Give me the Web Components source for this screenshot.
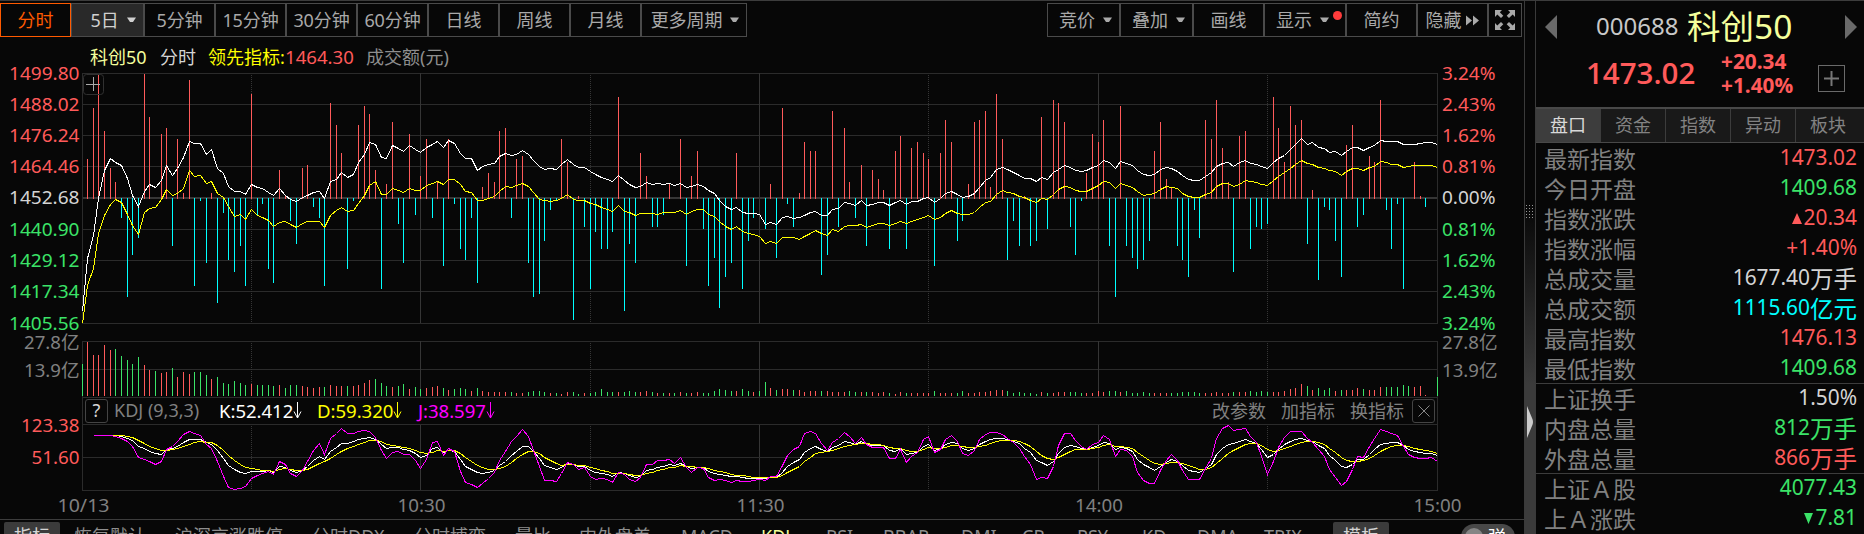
<!DOCTYPE html>
<html lang="zh-CN">
<head>
<meta charset="utf-8">
<title>科创50 000688</title>
<style>
    html, body { margin: 0; height: 534px; overflow: hidden; background: #070707; }
    body {
        font-family: "Noto Sans", "Noto Sans CJK SC", sans-serif;
        font-size: 18px;
        --red: #ff5a5a;
        --green: #3be368;
        --line: #4a4a4a;
        --grid: #2b2b2b;
        --dim: #808080;
    }
</style>
</head>
<body>
<stock-app></stock-app>

<script>
// Minute strength bars. Above the zero line = red, below = cyan, 0 = no bar.
const BARS = [
    0,159,108,74,131,168,182,218,297,255,238,74,117,0,134,128,246,139,193,80,286,201,263,193,303,213,260,272,246,286,
    94,215,204,269,283,170,196,221,244,168,165,207,218,286,103,125,153,269,201,125,106,114,170,289,184,122,224,263,134,215,
    176,139,218,182,266,139,204,249,260,218,283,187,173,182,131,128,218,159,156,263,297,294,241,210,201,139,162,320,196,227,
    289,232,249,249,232,97,311,244,263,153,176,227,227,215,183,0,139,266,176,151,229,286,258,308,277,263,153,289,241,218,
    0,229,184,258,108,204,227,193,142,151,151,275,255,111,227,128,182,218,165,246,170,179,190,249,151,136,249,148,142,153,
    159,266,153,120,142,241,221,184,122,120,111,187,94,139,260,221,246,196,246,241,117,229,100,103,122,227,255,201,173,134,
    142,120,246,297,106,246,258,269,260,241,151,122,179,187,246,260,277,210,238,120,139,100,148,182,272,136,131,249,227,229,
    224,97,128,162,106,125,120,244,190,280,207,210,241,277,145,125,227,215,156,162,100,210,249,204,289,0,162,196,207,0,0
];

const PRICE = [
    311.7,258.3,235,198,170,158.3,162.3,165.3,178.3,195,206.7,191,184.3,187.7,180.7,165.7,175.3,168.7,157.7,141,143.3,143.3,154.7,149.7,168.3,173.3,186.7,191.3,191.3,194.3,
    184.3,187.3,188.7,192,195.3,188.7,195,199.3,201.7,197.7,195,192.3,191.3,198.3,181.7,179,172.7,177.3,174,162.7,154.3,142.3,144.3,157,158.3,145.3,148.7,151.3,145.7,149.7,
    152.3,147.7,144,141,147,140,143.3,153.3,158.3,158.3,170.3,166,164.3,163.3,156.3,153.3,155.3,154.3,150.7,154.7,160.3,166.7,169.7,168.3,169.3,164.3,159.7,164.7,167.3,167.3,
    171,174,177.3,179.7,181.7,175.7,180.7,184.7,187.3,186.3,182.3,184.3,183.3,184.3,183.3,185.3,183.3,187.3,186.7,184.3,186.7,190,193.3,200,206.3,209.3,207.3,212.3,213.3,213.3,
    214.7,224.7,222.3,224.7,217.3,216.3,218.7,217,215,212.3,211.3,215,215.3,209.3,208,202.3,203.3,205.3,200.3,205.3,204,202.3,202.3,205,202.3,200.3,204.3,201.3,201,198,
    197.3,202.3,198.7,193.7,191.3,194.3,197.3,196.3,193,187.3,180,177.7,169.7,167,169.3,172.3,175,178.3,178.3,181.3,177.3,179.7,172.3,169.7,165.3,167.3,170.3,171.7,170.3,167.3,
    165.3,160.3,162,168.7,161.7,163.3,165.3,170.7,174.3,175.7,174.3,169.3,167,168.3,171.3,175,179.3,180.7,180.7,176,172.7,166.3,163.3,162.3,166.3,162.3,160.3,163,164.3,166.3,
    168.7,162.3,158.3,155.3,149.7,144.3,138.3,144.7,142.3,147,148.7,152.3,151.3,155.3,151.3,147,147.7,150.3,147.3,145.3,140.3,141.3,141.3,141.3,144,144,144,143,142.3,142.3,144.3
];

const LEAD = [
    323,285,268.3,233.3,215,204,199.7,202,214.3,225,234.3,212.3,208.7,207.3,199,189.7,195.3,193.3,188.7,170.7,176.3,175.3,183.7,181.7,193.7,197.3,206,216.7,214.3,219,
    209.3,215.7,217,220.7,226.7,222.7,221.3,224.7,227.3,223.7,221.3,221.3,221.3,227.3,215,210.7,207.7,211.3,210.3,203.3,195,185,181.7,194.3,194.3,188.3,190.3,192.3,188.7,190.3,
    190.3,185.7,183.3,181.3,184.3,179.3,179.3,184,191.3,192.3,200,200,198,196,191,186.3,187.3,185.7,183.3,186,192.3,199,200.3,201.7,200,198.3,194.7,199,200.3,200.3,
    203.3,204.3,207.3,209.7,211.3,205.3,211.3,212.3,215.3,213.3,213.3,213.3,214.3,212.3,212.3,212.3,210.3,214,211.7,209.3,209.3,214,216.7,221.3,226,229,226.3,231.3,233.3,234.3,
    236.3,243.3,241.3,243.3,237.3,237.3,237.3,239.3,236.7,233,230.3,233,235.7,229.3,231.3,226.3,225.3,225.3,224.3,227.3,225.3,223.3,223.3,225.7,223.3,221.3,223.7,221.3,219.3,217.3,
    215.3,219.3,217.3,213.3,210.3,213.3,214.3,214.3,212.3,207.3,202.7,201.3,194.3,190.3,192.3,193.3,196,197.3,200.3,202.3,198.3,199.3,194.3,189.3,186.3,187.3,190,191.3,191.3,188.3,
    185,181.3,182.3,188.3,183.3,185,187.3,191,195.3,194.3,193,189.3,186.3,187.3,188.7,193,196,197.3,197.3,194,192.3,186,183.3,183.3,186.3,184.3,180.7,181.3,182.3,184.3,
    185.3,180.3,176,172.7,168.3,164.7,160,163.3,164.7,167.7,168.3,170.3,171.7,175.3,171.3,168.3,168.3,170.3,167.7,166.3,161.3,162.7,164.3,164.3,167.3,166.7,165.3,165.3,165.3,165.3,167.3
];

// Turnover bars: top of the bar and r/g for rising/falling minute
const VOLUME = ("g364 r342 r355 r355 r345 r350 g349 g356 g360 g364 g357 r365 r370 g371 r373 r372 g368 r377 r372 r374 g372 g372 g375 r379 g377 g383 g384 g381 g383 g385 " +
    "r384 g385 g385 g385 g386 r385 g388 g385 g385 r386 r387 r388 r387 g387 r385 r386 r386 g386 r386 r385 r383 r380 g379 g383 g386 r387 g386 g384 r389 g387 " +
    "g389 r388 r387 r386 g388 r390 g389 g388 g389 r391 g388 r391 r392 r392 r392 r392 g392 r393 r393 g392 g391 g391 g392 r393 g393 r394 r392 g392 g394 r393 " +
    "g393 g392 g389 g392 g392 r392 g392 g391 g392 r392 r391 g392 r393 g393 r393 g393 r392 g393 r393 r392 g393 g393 g391 g389 g390 g391 r391 g389 g391 r392 " +
    "g391 g382 r388 g390 r389 r389 g390 r390 r392 r391 r391 g391 r391 r392 r392 r392 g391 g392 r392 g392 r392 r393 r392 g393 r394 r392 g393 r393 r393 r393 " +
    "r393 g391 r393 r393 r393 g393 g391 r393 r393 r392 r392 r391 r390 r390 g391 g393 g392 g393 g393 g394 r392 g393 r393 r392 r392 g392 g392 g393 r393 r393 " +
    "r391 r392 g391 g391 r392 g391 g393 g393 g392 g393 r393 r393 r393 g393 g393 g392 g392 g392 g393 r393 r393 r392 r393 r393 g392 r392 r392 g391 g392 g391 " +
    "g392 r392 r392 r391 r389 r388 r384 g386 r390 g388 g390 g388 r391 g390 r390 r390 r388 g389 r390 r390 r387 g387 g387 g387 g385 g386 r387 r386 r395 r396 g377").split(" ");

// J starts at minute 2. K and D are derived from it.
const J = [
    435.3,435.3,435.3,435.3,436.3,438,441,446.7,457.3,459.3,461.7,464.3,461.3,449.3,446,441.7,434.3,431.3,433.3,435.3,444,448.3,461.7,476.7,487,489.3,488.7,486.7,
    478,475,473.3,471.7,474,461.3,464,473.3,476.3,470,461,450,443.3,454,438,433.3,428.7,433.3,433.3,431,430.3,431.7,437.3,450,458.7,452.7,451.3,454,454.7,460.7,
    468.3,459.3,442.7,441,455.3,448.7,451.3,471.7,482.3,484.7,487,483.3,478.3,472.3,460.7,451.7,441.7,436,429.3,436,450,466.7,480.3,480.3,481,473.3,462.3,464.7,469,467.7,
    476.7,479.3,478.7,479.7,482.3,472.3,474.3,479,481.3,477.3,464.3,464,460.3,460.3,459.3,463.3,457.7,467.3,472.3,467.7,468.7,477.3,480.3,479.3,480,482.3,480,481.3,481.3,480.3,
    479.3,480.7,476.3,476.3,465,455,449.3,446,433.3,431.3,433.3,443.3,450.3,442.7,438.7,432.7,436.7,443.3,437.3,444.3,447.3,447,447,458.7,458.3,449.3,462.3,456.7,452.7,439.3,
    436.3,452.7,449.3,439.3,435.3,441.7,453.3,455.7,450,439.3,434.7,432.3,432.3,434.7,438,442,448.3,456.7,464.7,479.7,477.3,478.7,466,445,433.3,433.3,440.7,446,449.3,444.3,
    442.7,435,439.3,456.7,449.3,450.7,456.7,472.7,480,483.7,483.3,470,460,454.7,460,470,479.3,479.3,479.3,468.3,458.3,438.3,428.3,425,430.3,429,428.3,436.7,442.7,456.7,
    474.7,461.7,447.3,437.3,431.3,431.3,431.3,438.3,442.3,449.3,456.7,469.3,477.3,485.3,481,469.3,456.7,457.7,446.7,438.3,429.3,431.3,433.3,435.7,446.7,454.7,457.7,458.3,458.3,457.7,461
];

const LEFT = 82;
const RIGHT = 1437;
const STEP = (RIGHT - LEFT) / 240;
const minuteX = (i) => Math.floor(LEFT + STEP * i + 0.01);

const polyline = (values, color, start = 0) => {
    const points = values
        .map((y, i) => `${minuteX(i + start) + 0.5},${Math.floor(y) + 0.5}`)
        .join(" ");
    return `<polyline points="${points}" fill="none" stroke="${color}" shape-rendering="crispEdges"/>`;
};

const rect = (x, y, w, h, color) =>
    `<rect x="${x}" y="${y}" width="${w}" height="${h}" fill="${color}"/>`;

const label = (x, y, text, color, anchor = "start", width = 0) =>
    `<text x="${x}" y="${y + 6.8}" fill="${color}" text-anchor="${anchor}"${
        width ? ` textLength="${width}" lengthAdjust="spacingAndGlyphs"` : ""
    }>${text}</text>`;

// Half-hour grid: hours solid, half hours dotted
const verticals = (top, bottom) => {
    let out = rect(LEFT, top, 1, bottom - top, "#2b2b2b") + rect(RIGHT, top, 1, bottom - top + 1, "#2b2b2b");
    for (let i = 1; i < 8; i++) {
        const x = minuteX(i * 30);
        out += i % 2
            ? `<path d="M${x + 0.5} ${top + 2}V${bottom}" stroke="#353535" stroke-dasharray="1 1"/>`
            : rect(x, top, 1, bottom - top, "#353535");
    }
    return out;
};

class BaseElement extends HTMLElement {
    constructor() {
        super();
        this.attachShadow({ mode: "open" });
    }

    connectedCallback() {
        this.shadowRoot.innerHTML = this.render();
    }
}

class ToolButton extends BaseElement {
    render() {
        const icons = {
            caret: `<svg class="caret" width="9" height="6"><path d="M0 0.5H9L6 5H3Z" fill="currentColor"/></svg>`,
            forward: `<svg width="13" height="11" style="margin-left:5px"><path d="M0 .5L6 5.5 0 10.5ZM7 .5L13 5.5 7 10.5Z" fill="currentColor"/></svg>`,
            expand: `<svg width="22" height="22" viewBox="0 0 22 22" fill="currentColor"><path d="M1 1H8L5.8 3.2 9.3 6.7 7 9 3.3 5.5 1 8ZM21 1V8L18.7 5.5 15 9 12.7 6.7 16.2 3.2 14 1ZM1 21V14L3.3 16.5 7 13 9.3 15.3 5.8 18.8 8 21ZM21 21H14L16.2 18.8 12.7 15.3 15 13 18.7 16.5 21 14Z"/></svg>`,
        };
        return `
        <style>
            :host {
                display: flex; align-items: center; justify-content: center;
                box-sizing: border-box; height: 34px;
                border: 1px solid var(--line); color: #a9a9a9;
                white-space: nowrap; position: relative;
            }
            :host([active]) { border-color: #ff5a00; color: #ff5a00; }
            :host([filled]) { background: #292929; color: #d0d0d0; }
            .text { letter-spacing: -0.1px; margin-bottom: 2px; }
            .caret { margin-left: 8px; }
            .dot { position: absolute; right: 3px; top: 7px; width: 9px; height: 9px; border-radius: 50%; background: #ff3b3b; }
        </style>
        <span class="text"><slot></slot></span>${icons[this.getAttribute("icon")] || ""}
        ${this.hasAttribute("dot") ? `<i class="dot"></i>` : ""}`;
    }
}

class ToolBar extends BaseElement {
    render() {
        return `
        <style>
            :host { display: flex; padding-top: 2px; width: 1522px; justify-content: space-between; }
            div { display: flex; }
        </style>
        <div>
            <tool-button style="width:71px" active>分时</tool-button>
            <tool-button style="width:73px;padding-left:11px" icon="caret" filled>5日</tool-button>
            <tool-button style="width:71px">5分钟</tool-button>
            <tool-button style="width:71px">15分钟</tool-button>
            <tool-button style="width:71px">30分钟</tool-button>
            <tool-button style="width:71px">60分钟</tool-button>
            <tool-button style="width:71px">日线</tool-button>
            <tool-button style="width:71px">周线</tool-button>
            <tool-button style="width:71px">月线</tool-button>
            <tool-button style="width:106px;padding-left:2px" icon="caret">更多周期</tool-button>
        </div>
        <div>
            <tool-button style="width:73px;padding-left:4px" icon="caret">竞价</tool-button>
            <tool-button style="width:73px;padding-left:4px" icon="caret">叠加</tool-button>
            <tool-button style="width:71px">画线</tool-button>
            <tool-button style="width:82px;padding-right:5px" icon="caret" dot>显示</tool-button>
            <tool-button style="width:71px">简约</tool-button>
            <tool-button style="width:71px" icon="forward">隐藏</tool-button>
            <tool-button style="width:34px" icon="expand"></tool-button>
        </div>`;
    }
}

class ChartLegend extends BaseElement {
    render() {
        return `
        <style>
            :host { display: flex; align-items: center; height: 28px; padding: 5px 0 0 90px; margin-bottom: -5px; white-space: nowrap; }
            span { width: var(--w); }
        </style>
        <span style="--w:70px;color:#f4ff9c">科创50</span>
        <span style="--w:48px;color:#d4d4d4">分时</span>
        <span style="--w:77px;color:#ff0">领先指标:</span>
        <span style="--w:81px;color:var(--red);font-size:18.6px">1464.30</span>
        <span style="--w:90px;color:#8e8e8e">成交额(元)</span>`;
    }
}

class PriceChart extends BaseElement {
    render() {
        const prices = ["1499.80", "1488.02", "1476.24", "1464.46", "1452.68", "1440.90", "1429.12", "1417.34", "1405.56"];
        const percents = ["3.24%", "2.43%", "1.62%", "0.81%", "0.00%", "0.81%", "1.62%", "2.43%", "3.24%"];
        const rows = [73, 104, 135, 166, 197, 229, 260, 291, 323];
        let svg = "";

        rows.forEach((y, i) => {
            const color = i < 4 ? "var(--red)" : i > 4 ? "var(--green)" : "#d4d4d4";
            svg += rect(LEFT, y, RIGHT - LEFT, i === 4 ? 2 : 1, i === 4 ? "#363636" : "#2b2b2b");
            svg += label(79.5, y, prices[i], color, "end", 70.5);
            svg += label(1442, y, percents[i], color, "start", 53.5);
        });
        [341, 369, 397].forEach((y) => {
            svg += rect(LEFT, y, RIGHT - LEFT, 1, "#2b2b2b");
        });
        svg += label(79.5, 342, "27.8亿", "#808080", "end", 55.5) + label(79.5, 370, "13.9亿", "#808080", "end", 55.5);
        svg += label(1442, 342, "27.8亿", "#808080", "start", 55.5) + label(1442, 370, "13.9亿", "#808080", "start", 55.5);
        svg += verticals(73, 323) + verticals(341, 397);

        BARS.forEach((y, i) => {
            if (!y) return;
            svg += y < 197
                ? rect(minuteX(i), y, 1, 199 - y, "var(--red)")
                : rect(minuteX(i), 198, 1, y - 198, "#0ff");
        });
        VOLUME.forEach((v, i) => {
            const y = Number(v.slice(1));
            svg += rect(minuteX(i), y, 1, 396 - y, v[0] === "r" ? "var(--red)" : "var(--green)");
        });
        svg += polyline(LEAD, "#ff0") + polyline(PRICE, "#fff");
        svg += `<rect x="83.5" y="74.5" width="20" height="20" rx="3" fill="none" stroke="#303030"/>
            <path d="M86 84.5H100M93.5 77V91" stroke="#aaa" shape-rendering="crispEdges"/>`;

        return `
        <style>
            :host { display: block; height: 333px; }
            svg { display: block; overflow: visible; font-size: 18.5px; }
        </style>
        <svg width="1524" height="333" viewBox="0 65 1524 333">${svg}</svg>`;
    }
}

class KdjHeader extends BaseElement {
    render() {
        const arrow = `<svg width="9" height="18" fill="none" stroke="currentColor"><path d="M4.5 1V17M1 10.5L4.5 17 8 10.5"/></svg>`;
        return `
        <style>
            :host {
                display: flex; align-items: center; box-sizing: border-box;
                width: 1356px; height: 26px; margin-left: 82px; padding: 0 2px 1px;
                border: solid var(--grid); border-width: 0 1px; white-space: nowrap;
            }
            .box { box-sizing: border-box; width: 23px; height: 24px; border: 1px solid #444; border-radius: 3px; color: #d4d4d4; text-align: center; line-height: 21px; }
            .value { display: flex; align-items: center; width: var(--w); font-size: 18.6px; letter-spacing: -0.05px; margin-top: -1px; }
            .name { width: 105px; margin: -1px 0 0 6px; color: var(--dim); }
            .action { color: var(--dim); width: 69px; margin-top: -1px; }
            .spacer { flex: 1; }
            .close { display: grid; place-items: center; margin-left: -7px; }
        </style>
        <span class="box">?</span>
        <span class="name">KDJ (9,3,3)</span>
        <span class="value" style="--w:98px;color:#fff">K:52.412${arrow}</span>
        <span class="value" style="--w:101px;color:#ff0">D:59.320${arrow}</span>
        <span class="value" style="--w:90px;color:#f0f">J:38.597${arrow}</span>
        <span class="spacer"></span>
        <span class="action">改参数</span>
        <span class="action">加指标</span>
        <span class="action">换指标</span>
        <span class="box close"><svg width="12" height="12" stroke="#888"><path d="M0.5 0.5L11.5 11.5M11.5 0.5L0.5 11.5"/></svg></span>`;
    }
}

class KdjChart extends BaseElement {
    render() {
        let d = J[0];
        const D = J.map((j) => (d = (6 * d + j) / 7));
        const K = J.map((j, i) => (j + 2 * D[i]) / 3);

        let svg = verticals(424, 490);
        [424, 457, 490].forEach((y) => {
            svg += rect(LEFT, y, RIGHT - LEFT, 1, "#2b2b2b");
        });
        svg += label(79.5, 425, "123.38", "var(--red)", "end", 58.5);
        svg += label(79.5, 457, "51.60", "var(--red)", "end", 48);
        svg += polyline(K, "#fff", 2) + polyline(D, "#ff0", 2) + polyline(J, "#f0f", 2);
        [[83.5, "10/13", 52], [421.5, "10:30", 48], [760.5, "11:30", 48], [1099, "14:00", 48], [1437.5, "15:00", 48]].forEach(([x, text, w]) => {
            svg += label(x, 505, text, "#808080", "middle", w);
        });

        return `
        <style>
            :host { display: block; height: 95px; }
            svg { display: block; overflow: visible; font-size: 18.5px; }
        </style>
        <svg width="1524" height="95" viewBox="0 424 1524 95">${svg}</svg>`;
    }
}

class IndicatorTabs extends BaseElement {
    render() {
        const tabs = [
            ["恢复默认", 101], ["沪深京涨跌停", 137], ["分时DDX", 102], ["分时博弈", 101], ["量比", 64], ["内外盘差", 102],
            ["MACD", 80], ["KDJ", 65], ["RSI", 57], ["BBAR", 78], ["DMI", 61], ["CR", 55], ["PSY", 65], ["KD", 55], ["DMA", 67], ["TRIX", 69],
        ];
        return `
        <style>
            :host { display: flex; border-top: 1px solid #3c3c3c; padding: 2px 0 0 4px; color: #8e8e8e; height: 28px; line-height: 29px; white-space: nowrap; overflow: hidden; }
            .box { width: 56px; background: #3b3b3b; color: #d4d4d4; text-align: center; border-radius: 2px; }
            .first { margin-right: 14px; }
            .on { color: #f4ff9c; }
            .switch { box-sizing: border-box; margin: 2px 0 0 72px; width: 54px; height: 26px; border-radius: 13px; background: #484848; color: #fff; display: flex; align-items: center; padding-left: 4px; gap: 5px; }
            .knob { width: 18px; height: 18px; border-radius: 50%; background: #858585; }
        </style>
        <span class="box first">指标</span>
        ${tabs.map(([name, w]) => `<span class="${name === "KDJ" ? "on" : ""}" style="width:${w}px">${name}</span>`).join("")}
        <span class="box">模板</span>
        <span class="switch"><i class="knob"></i>弹</span>`;
    }
}

class PaneSplitter extends BaseElement {
    render() {
        return `
        <style>
            :host { display: flex; flex-direction: column; align-items: center; box-sizing: border-box; border: solid #3a3a3a; border-width: 0 1px; background: linear-gradient(#070707 38%, #3b3b3b 72%); }
            .grip { margin: 203px 2px 0 0; }
            .handle { margin-top: 188px; }
        </style>
        <svg class="grip" width="7" height="14"><path d="M.5 1V14M3.5 1V14M6.5 1V14" stroke="#999" stroke-dasharray="1 2"/></svg>
        <svg class="handle" width="7" height="32"><path d="M0 0L5 12Q7 16 5 20L0 32Z" fill="#ccc"/></svg>`;
    }
}

class QuoteHeader extends BaseElement {
    render() {
        return `
        <style>
            :host { display: grid; grid-template-rows: 50px 56px; height: 106px; box-sizing: border-box; }
            .title { display: flex; align-items: center; padding: 2px 7px 0 9px; }
            .code { margin: -3px 0 0 39px; width: 91px; font-size: 24px; color: #c8c8c8; }
            .name { flex: 1; margin-top: -2px; font-size: 33.5px; line-height: 46px; color: #f4ff9c; white-space: nowrap; }
            .quote { display: flex; color: var(--red); padding-left: 50px; }
            .price { width: 135px; font: 600 29.5px/44px "Open Sans", "Noto Sans", sans-serif; }
            .change { width: 97px; font: bold 20.8px/23.5px "Open Sans", "Noto Sans", sans-serif; margin-top: -1px; }
            .add { box-sizing: border-box; width: 27px; height: 27px; border: 1px solid #6a6a6a; margin-top: 14px; display: grid; place-items: center; }
        </style>
        <div class="title">
            <svg width="12" height="24"><path d="M12 0V24L0 12Z" fill="#6a6a6a"/></svg>
            <span class="code">000688</span>
            <span class="name">科创50</span>
            <svg width="12" height="24"><path d="M0 0V24L12 12Z" fill="#6a6a6a"/></svg>
        </div>
        <div class="quote">
            <span class="price">1473.02</span>
            <span class="change">+20.34<br>+1.40%</span>
            <span class="add"><svg width="15" height="15" stroke="#777" stroke-width="2"><path d="M0 7.5H15M7.5 0V15"/></svg></span>
        </div>`;
    }
}

class QuoteTabs extends BaseElement {
    render() {
        return `
        <style>
            :host { display: grid; grid-template-columns: 65px 65px 65px 65px 1fr; border: solid #484848; border-width: 2px 0 1px; height: 33px; }
            span { display: grid; place-items: center; padding-bottom: 3px; background: #191919; color: #828282; border-right: 1px solid #3c3c3c; }
            .on { background: #3d3d3d; color: #d8d8d8; }
            span:last-child { border: 0; padding-right: 4px; }
        </style>
        <span class="on">盘口</span><span>资金</span><span>指数</span><span>异动</span><span>板块</span>`;
    }
}

class QuoteRow extends BaseElement {
    render() {
        const unit = this.getAttribute("unit");
        const arrow = this.getAttribute("arrow");
        const shapes = { up: "M0 11L5 0 10 11Z", down: "M0 0H9L4.5 11Z" };
        return `
        <style>
            :host { display: flex; justify-content: space-between; box-sizing: border-box; height: 30px; padding: 0 7px 0 8px; line-height: 30px; white-space: nowrap; }
            :host([ruled]) { border-top: 1px solid #3c3c3c; line-height: 29px; }
            .name { color: var(--dim); font-size: 23px; margin-top: 1px; }
            .value { display: flex; align-items: center; font-size: 20.9px; color: var(--tone, #d4d4d4); }
            .value span { margin-top: -2px; }
            .value .unit { font-size: 23.5px; margin-top: 2px; }
            svg { margin-right: 2px; }
        </style>
        <span class="name">${this.getAttribute("name")}</span>
        <span class="value">
            ${arrow ? `<svg width="10" height="11"><path d="${shapes[arrow]}" fill="currentColor"/></svg>` : ""}
            <span><slot></slot></span>${unit ? `<span class="unit">${unit}</span>` : ""}
        </span>`;
    }
}

class QuotePanel extends BaseElement {
    render() {
        return `
        <style>
            :host { display: block; overflow: hidden; }
            .up { --tone: var(--red); }
            .down { --tone: var(--green); }
            .cash { --tone: #0ff; }
        </style>
        <quote-header></quote-header>
        <quote-tabs></quote-tabs>
        <quote-row class="up" name="最新指数">1473.02</quote-row>
        <quote-row class="down" name="今日开盘">1409.68</quote-row>
        <quote-row class="up" name="指数涨跌" arrow="up">20.34</quote-row>
        <quote-row class="up" name="指数涨幅">+1.40%</quote-row>
        <quote-row name="总成交量" unit="万手">1677.40</quote-row>
        <quote-row class="cash" name="总成交额" unit="亿元">1115.60</quote-row>
        <quote-row class="up" name="最高指数">1476.13</quote-row>
        <quote-row class="down" name="最低指数">1409.68</quote-row>
        <quote-row ruled name="上证换手">1.50%</quote-row>
        <quote-row class="down" name="内盘总量" unit="万手">812</quote-row>
        <quote-row class="up" name="外盘总量" unit="万手">866</quote-row>
        <quote-row ruled class="down" name="上证Ａ股">4077.43</quote-row>
        <quote-row class="down" name="上Ａ涨跌" arrow="down">7.81</quote-row>`;
    }
}

class StockApp extends BaseElement {
    render() {
        return `
        <style>
            :host { display: grid; grid-template-columns: 1524px 12px 328px; box-sizing: border-box; height: 534px; overflow: hidden; border-top: 1px solid #3c3c3c; }
            main { overflow: hidden; }
        </style>
        <main>
            <tool-bar></tool-bar>
            <chart-legend></chart-legend>
            <price-chart></price-chart>
            <kdj-header></kdj-header>
            <kdj-chart></kdj-chart>
            <indicator-tabs></indicator-tabs>
        </main>
        <pane-splitter></pane-splitter>
        <quote-panel></quote-panel>`;
    }
}

customElements.define("tool-button", ToolButton);
customElements.define("tool-bar", ToolBar);
customElements.define("chart-legend", ChartLegend);
customElements.define("price-chart", PriceChart);
customElements.define("kdj-header", KdjHeader);
customElements.define("kdj-chart", KdjChart);
customElements.define("indicator-tabs", IndicatorTabs);
customElements.define("pane-splitter", PaneSplitter);
customElements.define("quote-header", QuoteHeader);
customElements.define("quote-tabs", QuoteTabs);
customElements.define("quote-row", QuoteRow);
customElements.define("quote-panel", QuotePanel);
customElements.define("stock-app", StockApp);
</script>
</body>
</html>
